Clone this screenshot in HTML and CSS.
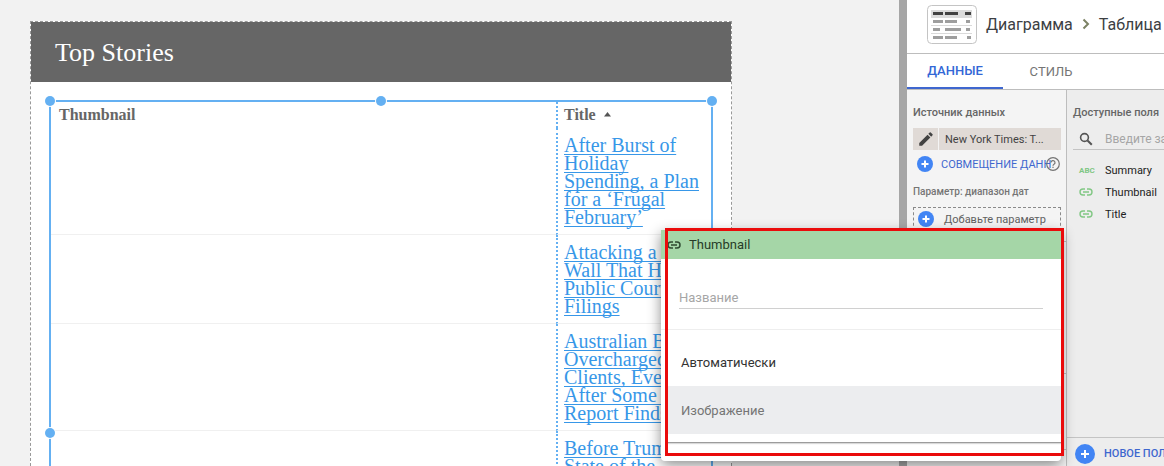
FILE: index.html
```html
<!DOCTYPE html>
<html lang="ru">
<head>
    <meta charset="UTF-8">
    <meta name="viewport" content="width=device-width, initial-scale=1.0">
    <title>Top Stories</title>
    <link rel="stylesheet" href="styles.css">
</head>
<body>
    <div class="app">
        <!-- Report canvas -->
        <main class="canvas">
            <div class="page">
                <h1>Top Stories</h1>
                <div class="chart">
                    <span class="handle top-left"></span>
                    <span class="handle top"></span>
                    <span class="handle top-right"></span>
                    <span class="handle left"></span>
                    <table>
                        <thead>
                            <tr>
                                <th class="thumb">Thumbnail</th>
                                <th>Title <svg class="sort" width="7" height="5" viewBox="0 0 7 5"><path d="M3.500 0L7 4.500H0z" fill="#555"/></svg></th>
                            </tr>
                        </thead>
                        <tbody>
                            <tr>
                                <td class="thumb"></td>
                                <td><a href="#">After Burst of<br>Holiday<br>Spending, a Plan<br>for a ‘Frugal<br>February’</a></td>
                            </tr>
                            <tr>
                                <td class="thumb"></td>
                                <td><a href="#">Attacking a Pay<br>Wall That Hides<br>Public Court<br>Filings</a></td>
                            </tr>
                            <tr>
                                <td class="thumb"></td>
                                <td><a href="#">Australian Banks<br>Overcharged<br>Clients, Even<br>After Some Died,<br>Report Finds</a></td>
                            </tr>
                            <tr>
                                <td class="thumb"></td>
                                <td><a href="#">Before Trump’s<br>State of the</a></td>
                            </tr>
                        </tbody>
                    </table>
                </div>
            </div>
        </main>

        <!-- Properties panel -->
        <aside class="panel">
            <header class="panel-header">
                <svg class="chart-icon" width="50" height="39" viewBox="0 0 50 39">
                    <rect x=".5" y=".5" width="49" height="38" rx="4" fill="#fff" stroke="#c4c4c4"/>
                    <path d="M4 5h41v8H4z" fill="#dcdcdc"/>
                    <path d="M4 20.500h41M4 28.500h41" stroke="#dadada"/>
                    <path d="M6 8.500h10M18 8.500h13M38 8.500h6" stroke="#424242" stroke-width="3"/>
                    <path d="M6 16.500h10M18 16.500h12M39 16.500h4M6 24.500h7M18 24.500h16M39 24.500h4M6 32.500h10M18 32.500h12M40 32.500h4" stroke="#9e9e9e" stroke-width="3"/>
                </svg>
                <span>Диаграмма</span>
                <svg width="8" height="12" viewBox="0 0 8 12"><path d="M1.500 1.500L6 6l-4.500 4.500" fill="none" stroke="#7c8264" stroke-width="2"/></svg>
                <span>Таблица</span>
            </header>
            <nav class="tabs">
                <button class="tab active">ДАННЫЕ</button>
                <button class="tab">СТИЛЬ</button>
            </nav>
            <div class="columns">
                <section class="settings">
                    <div class="group">
                        <h2>Источник данных</h2>
                        <div class="source">
                            <button class="edit" aria-label="Изменить"><svg width="18" height="18" viewBox="0 0 24 24"><path d="M3 17.250V21h3.750L17.810 9.940l-3.750-3.750L3 17.250zM20.710 7.040a1 1 0 0 0 0-1.410l-2.340-2.340a1 1 0 0 0-1.410 0l-1.830 1.830 3.750 3.750 1.830-1.830z" fill="#424242"/></svg></button>
                            <button class="source-name">New York Times: T...</button>
                        </div>
                        <div class="blend">
                            <svg class="plus" viewBox="0 0 16 16"><circle cx="8" cy="8" r="8" fill="#4285f4"/><path d="M8 4.500v7M4.500 8h7" stroke="#fff" stroke-width="2"/></svg>
                            <button class="blend-button">СОВМЕЩЕНИЕ ДАННЫХ</button>
                            <svg class="help" width="14" height="14" viewBox="0 0 14 14"><circle cx="7" cy="7" r="6.300" fill="none" stroke="#757575" stroke-width="1.200"/><path d="M5 5.600a2 2 0 1 1 3 1.700c-.7.400-1 .7-1 1.500M7 9.700v1.300" fill="none" stroke="#757575" stroke-width="1.200"/></svg>
                        </div>
                        <h3>Параметр: диапазон дат</h3>
                        <button class="add">
                            <svg class="plus" viewBox="0 0 16 16"><circle cx="8" cy="8" r="8" fill="#4285f4"/><path d="M8 4.500v7M4.500 8h7" stroke="#fff" stroke-width="2"/></svg>
                            <span>Добавьте параметр</span>
                        </button>
                    </div>
                    <div class="group middle"></div>
                    <div class="group bottom"></div>
                </section>
                <section class="fields">
                    <h2>Доступные поля</h2>
                    <label class="search">
                        <svg width="14" height="14" viewBox="0 0 14 14"><circle cx="5.500" cy="5.500" r="3.900" fill="none" stroke="#555" stroke-width="1.600"/><path d="M8.500 8.500l4.300 4.300" stroke="#555" stroke-width="2"/></svg>
                        <input type="text" placeholder="Введите запрос" aria-label="Введите запрос">
                    </label>
                    <ul>
                        <li><span class="abc">ABC</span>Summary</li>
                        <li><svg class="link" width="14" height="8" viewBox="0 0 14 8"><path d="M6 1H4a3 3 0 0 0 0 6h2M8 1h2a3 3 0 0 1 0 6H8M4 4h6" fill="none" stroke="#81c784" stroke-width="1.400"/></svg>Thumbnail</li>
                        <li><svg class="link" width="14" height="8" viewBox="0 0 14 8"><path d="M6 1H4a3 3 0 0 0 0 6h2M8 1h2a3 3 0 0 1 0 6H8M4 4h6" fill="none" stroke="#81c784" stroke-width="1.400"/></svg>Title</li>
                    </ul>
                    <button class="new-field">
                        <svg width="20" height="20" viewBox="0 0 20 20"><circle cx="10" cy="10" r="10" fill="#4285f4"/><path d="M10 6v8M6 10h8" stroke="#fff" stroke-width="2"/></svg>
                        <span>НОВОЕ ПОЛЕ</span>
                    </button>
                </section>
            </div>
        </aside>
    </div>

    <!-- Field editor -->
    <div class="popup">
        <div class="popup-header">
            <svg width="14" height="8" viewBox="0 0 14 8"><path d="M6 1H4a3 3 0 0 0 0 6h2M8 1h2a3 3 0 0 1 0 6H8M4 4h6" fill="none" stroke="#2f4a31" stroke-width="1.500"/></svg>
            <span>Thumbnail</span>
        </div>
        <div class="name-box">
            <input type="text" placeholder="Название" aria-label="Название">
        </div>
        <div class="menu">
            <button class="option">Автоматически</button>
            <button class="option selected">Изображение</button>
        </div>
    </div>
    <div class="highlight"></div>
</body>
</html>
```

FILE: styles.css
```css
* {
    box-sizing: border-box;
}

body {
    margin: 0;
    height: 100vh;
    overflow: hidden;
    position: relative;
    font-family: Roboto, sans-serif;
    font-size: 12px;
    color: #424242;
}

h1, h2, h3, ul {
    margin: 0;
    padding: 0;
    font-weight: normal;
}

button, input {
    font: inherit;
    color: inherit;
    margin: 0;
    padding: 0;
    border: none;
    background: none;
    text-align: left;
}

button {
    cursor: pointer;
    white-space: nowrap;
}

svg {
    flex-shrink: 0;
}

.app {
    display: flex;
    height: 100%;
}

/* Canvas */
.canvas {
    flex: 1;
    min-width: 0;
    padding: 21px 167px 0 30px;
    background: #f2f2f2;
    border-right: 8px solid #a6a6a6;
    overflow: hidden;
    font-family: Georgia, "Liberation Serif", serif;
}

.page {
    height: 100%;
    background: #fff;
    border: 1px dashed #999;
    border-bottom: none;
}

.page h1 {
    padding: 0 24px;
    background: #666;
    color: #fff;
    font-size: 26px;
    line-height: 62px;
    height: 60px;
}

.chart {
    position: relative;
    margin: 18px 18px 0;
    border: 2px solid #64b0f2;
    border-bottom: none;
}

.handle {
    position: absolute;
    width: 10px;
    height: 10px;
    border-radius: 50%;
    background: #64b0f2;
    box-shadow: 0 0 0 1px #fff;
    transform: translate(-50%, -50%);
}

.top-left {
    top: -1px;
    left: -1px;
}

.top {
    top: -1px;
    left: 50%;
}

.top-right {
    top: -1px;
    left: calc(100% + 1px);
}

.left {
    top: 331px;
    left: -1px;
}

table {
    width: 100%;
    border-collapse: separate;
    border-spacing: 0;
}

th {
    height: 26px;
    padding: 0 6px;
    color: #666;
    font-size: 16px;
    line-height: 26px;
    text-align: left;
}

td {
    padding: 8px 6px;
    border-bottom: 1px solid #f0f0f0;
    font-size: 20px;
    line-height: 18px;
    white-space: nowrap;
    vertical-align: top;
}

th:last-child,
td:last-child {
    width: 155px;
    max-width: 155px;
    border-left: 2px dotted #64b0f2;
}

th.thumb {
    padding-left: 8px;
}

td a {
    color: #3797e8;
    text-decoration-thickness: 1px;
    text-underline-offset: 2px;
    text-decoration-skip-ink: none;
}

.sort {
    margin-left: 4px;
    vertical-align: 3px;
}

/* Panel */
.panel {
    display: flex;
    flex-direction: column;
    width: 257px;
    overflow: hidden;
    background: #fff;
    white-space: nowrap;
}

.panel-header {
    display: flex;
    align-items: center;
    gap: 9px;
    height: 54px;
    padding: 0 0 5px 20px;
    border-bottom: 1px solid #bdbdbd;
    color: #3c4043;
    font-size: 16px;
}

.tabs {
    display: flex;
    height: 36px;
    border-bottom: 1px solid #bdbdbd;
}

.tab {
    width: 96px;
    color: #757575;
    font-size: 13px;
    text-align: center;
}

.tab.active {
    border-bottom: 2px solid #3f67cf;
    color: #3367d6;
    font-weight: 500;
}

.columns {
    display: flex;
    flex: 1;
    min-height: 0;
}

.settings {
    width: 160px;
    border-right: 1px solid #bdbdbd;
    background: #f4f4f4;
}

.group {
    height: 152px;
    padding: 13px 5px 0 6px;
    border-bottom: 1px solid #bdbdbd;
}

.group.middle {
    height: 132px;
}

.group.bottom {
    height: 76px;
}

h2 {
    color: #666;
    font-size: 11px;
    font-weight: 500;
    line-height: 20px;
}

h3 {
    color: #757575;
    font-size: 10px;
    font-weight: 500;
    line-height: 20px;
}

.source {
    display: flex;
    gap: 1px;
    height: 22px;
    margin: 5px 0 4px;
}

.source button {
    background: #e0dad6;
}

.edit {
    display: flex;
    align-items: center;
    justify-content: center;
    width: 25px;
}

.source .source-name {
    flex: 1;
    padding-left: 6px;
    font-size: 11px;
}

.plus {
    width: 16px;
    height: 16px;
}

.blend {
    position: relative;
    display: flex;
    align-items: center;
    gap: 8px;
    height: 20px;
    margin-bottom: 8px;
    padding: 0 10px 0 4px;
}

.blend-button {
    overflow: hidden;
    color: #3f67cf;
    font-size: 11px;
}

.help {
    position: absolute;
    right: 1px;
    top: 3px;
}

.add {
    display: flex;
    align-items: center;
    gap: 10px;
    width: 100%;
    height: 24px;
    margin-top: 5px;
    padding: 0 4px;
    border: 1px dashed #8a8a8a;
    color: #616161;
    font-size: 11px;
}

.fields {
    display: flex;
    flex: 1;
    flex-direction: column;
    min-width: 0;
    padding: 13px 0 0 6px;
    background: #ededed;
}

.search {
    display: flex;
    align-items: center;
    gap: 12px;
    height: 22px;
    margin-top: 5px;
    padding-left: 6px;
    border-bottom: 1px solid #c4c4c4;
}

.search input {
    flex: 1;
    min-width: 0;
    outline: none;
}

::placeholder {
    color: #a6a6a6;
    opacity: 1;
}

ul {
    flex: 1;
    margin-top: 9px;
    list-style: none;
}

li {
    display: flex;
    align-items: center;
    height: 22px;
    padding-left: 6px;
    color: #212121;
    font-size: 11px;
}

.abc {
    width: 26px;
    color: #81c784;
    font-size: 8px;
    font-weight: bold;
}

.link {
    margin-right: 12px;
}

.new-field {
    display: flex;
    align-items: center;
    gap: 9px;
    height: 29px;
    margin-left: -6px;
    padding: 3px 0 0 8px;
    border-top: 1px solid #c4c4c4;
    overflow: hidden;
    color: #3f67cf;
    font-size: 11px;
    font-weight: 500;
}

/* Popup */
.popup {
    position: absolute;
    top: 230px;
    right: 103px;
    width: 400px;
    padding-bottom: 18px;
    border-radius: 0 0 4px 4px;
    background: #fff;
    box-shadow: 0 4px 14px rgba(0, 0, 0, 0.45);
    font-size: 13px;
}

.popup-header {
    display: flex;
    align-items: center;
    gap: 8px;
    height: 29px;
    padding-left: 6px;
    background: #a5d6a7;
    color: #263c28;
}

.name-box {
    height: 71px;
    padding: 27px 18px 0;
    border-bottom: 1px solid #eee;
}

.name-box input {
    width: 100%;
    height: 23px;
    border-bottom: 1px solid #d0d0d0;
    outline: none;
}

.menu {
    margin-left: 6px;
    padding: 8px 0;
    border-bottom: 1px solid #9c9c9c;
    box-shadow: 0 1px 1px rgba(0, 0, 0, 0.15);
}

.option {
    display: block;
    width: 100%;
    height: 48px;
    padding-left: 14px;
    color: #333;
}

.option.selected {
    background: #ecedef;
    color: #757575;
}

.highlight {
    position: absolute;
    top: 228px;
    right: 100px;
    width: 399px;
    height: 228px;
    border: 3px solid #ea0b0b;
    pointer-events: none;
}
```
